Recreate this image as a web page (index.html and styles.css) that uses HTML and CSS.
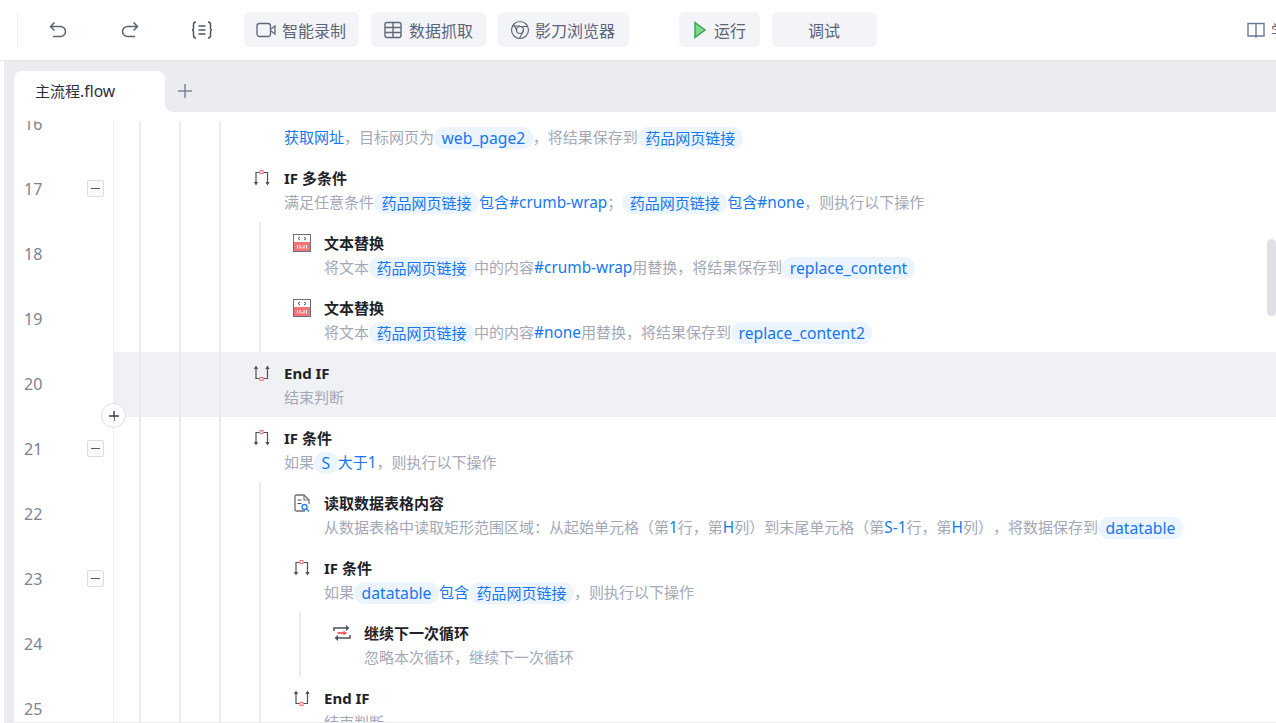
FILE: index.html
```html
<!DOCTYPE html>
<html lang="zh-CN">
<head>
<meta charset="utf-8">
<title>主流程.flow</title>
<link rel="stylesheet" href="styles.css">
</head>
<body>
<svg class="defs" width="0" height="0" aria-hidden="true">
  <symbol id="i-if" viewBox="0 0 20 20">
    <path d="M4 15V4.500H7.500M11.500 4.500H15.500V15" fill="none" stroke="#4d525d" stroke-width="1.200"/>
    <path d="M1.800 14L4 17.500L6.200 14ZM13.300 14L15.500 17.500L17.700 14Z" fill="#4d525d"/>
    <rect x="8" y="2.600" width="3" height="3" fill="#fff" stroke="#ee6a6a" stroke-width="1"/>
  </symbol>
  <symbol id="i-end" viewBox="0 0 20 20">
    <path d="M4 5V15.500H7.500M11.500 15.500H15.500V5" fill="none" stroke="#4d525d" stroke-width="1.200"/>
    <path d="M1.800 6L4 2.500L6.200 6ZM13.300 6L15.500 2.500L17.700 6Z" fill="#4d525d"/>
    <rect x="8" y="14.400" width="3" height="3" fill="#fff" stroke="#ee6a6a" stroke-width="1"/>
  </symbol>
  <symbol id="i-text" viewBox="0 0 20 20">
    <rect x="1.500" y="1.500" width="17" height="17" fill="#fff" stroke="#6b6f78"/>
    <rect x="2" y="9" width="16" height="9" fill="#f27474"/>
    <path d="M8 4L6 5.500L8 7M12 4L14 5.500L12 7" fill="none" stroke="#4a4f58" stroke-width="1"/>
    <path d="M5.500 12v3.500M8 12v3.500M10 14v1.500M12 12v3.500M14.500 12v3.500" stroke="#fff" stroke-width="1"/>
  </symbol>
  <symbol id="i-read" viewBox="0 0 20 20">
    <path d="M13 18H4.500Q3 18 3 16.500V3.500Q3 2 4.500 2H12L17 7V11" fill="none" stroke="#6b6f78" stroke-width="1.300"/>
    <path d="M12 2V7H17" fill="none" stroke="#6b6f78" stroke-width="1.100"/>
    <path d="M5.500 7H9.500M5.500 10.500H9.500" stroke="#4a4f58" stroke-width="1.200"/>
    <circle cx="12.500" cy="14" r="2.500" fill="none" stroke="#2f7ff0" stroke-width="1.400"/>
    <path d="M14.500 16L17 18.500" stroke="#2f7ff0" stroke-width="1.500"/>
  </symbol>
  <symbol id="i-loop" viewBox="0 0 20 20">
    <path d="M2 8V5H16" fill="none" stroke="#4d525d" stroke-width="1.500"/>
    <path d="M18 12V15H4" fill="none" stroke="#4d525d" stroke-width="1.500"/>
    <path d="M14 2L17.500 5L14 8ZM6 12L2.500 15L6 18Z" fill="#4d525d"/>
    <path d="M5.500 10H12.500" stroke="#f05a5a" stroke-width="1.800"/>
    <path d="M11.500 7.500L15 10L11.500 12.500Z" fill="#f05a5a"/>
  </symbol>
</svg>

<header class="topbar">
  <span class="divider"></span>
  <span class="tool tool-first">
    <svg class="ico" viewBox="0 0 20 20"><path d="M6.500 2.500L2.500 6.500L6.500 10.500M3 6.500H12.500A5 5 0 0 1 12.500 16.500H5" fill="none" stroke="#5c6370" stroke-width="1.500"/></svg>
  </span>
  <span class="tool">
    <svg class="ico" viewBox="0 0 20 20"><path d="M13.500 2.500L17.500 6.500L13.500 10.500M17 6.500H7.500A5 5 0 0 0 7.500 16.500H15" fill="none" stroke="#5c6370" stroke-width="1.500"/></svg>
  </span>
  <span class="tool">
    <svg class="ico-wide" viewBox="0 0 22 20"><path d="M5 2Q2.500 2 2.500 4.500V8Q2.500 10 1 10Q2.500 10 2.500 12V15.500Q2.500 18 5 18M17 2Q19.500 2 19.500 4.500V8Q19.500 10 21 10Q19.500 10 19.500 12V15.500Q19.500 18 17 18M7.500 6H14.500M7.500 10H14.500M7.500 14H14.500" fill="none" stroke="#4f5665" stroke-width="1.500"/></svg>
  </span>
  <button class="btn btn-first" type="button">
    <svg class="ico" viewBox="0 0 20 20"><rect x="1" y="3.500" width="13.500" height="13" rx="2.500" fill="none" stroke="#5f6778" stroke-width="1.300"/><path d="M15 9L19 6V14L15 11" fill="none" stroke="#5f6778" stroke-width="1.300"/></svg>
    智能录制
  </button>
  <button class="btn" type="button">
    <svg class="ico" viewBox="0 0 20 20"><rect x="2" y="2.500" width="16" height="15" rx="2" fill="none" stroke="#5f6778" stroke-width="1.400"/><path d="M2 7.500H18M2 12.500H18M10 2.500V17.500" stroke="#5f6778" stroke-width="1.400"/></svg>
    数据抓取
  </button>
  <button class="btn btn-wide" type="button">
    <svg class="ico" viewBox="0 0 20 20"><circle cx="10" cy="10" r="8.500" fill="none" stroke="#5f6778" stroke-width="1.200"/><circle cx="10" cy="10" r="3.500" fill="none" stroke="#5f6778" stroke-width="1.200"/><path d="M3 6H10M13.500 10L9.500 18.500M6.500 10L3.500 4.500M10 6.500H17.500" fill="none" stroke="#5f6778" stroke-width="1.100"/></svg>
    影刀浏览器
  </button>
  <button class="btn btn-run" type="button">
    <svg class="play" viewBox="0 0 14 20"><path d="M2 2.500L12 10L2 17.500Z" fill="#7fd68d" stroke="#3fa652" stroke-width="1.500"/></svg>
    运行
  </button>
  <button class="btn btn-debug" type="button">调试</button>
  <span class="help">
    <svg class="ico" viewBox="0 0 20 20"><path d="M2 3.500H18V16H11L10 17L9 16H2ZM10 3.500V16.500" fill="none" stroke="#6c7a96" stroke-width="1.400"/></svg>
    学习中心
  </span>
</header>

<main class="workspace">
  <div class="tabbar">
    <div class="tabcol"><div class="tab">主流程<span class="lat">.flow</span></div></div>
    <div class="tabrest">
      <svg class="plus" viewBox="0 0 16 16"><path d="M8 1V15M1 8H15" stroke="#7d8494" stroke-width="1.500"/></svg>
    </div>
  </div>
  <section class="editor">
    <div class="viewport">
      <div class="list">

        <div class="row">
          <div class="gutter"><span class="num">16</span></div>
          <div class="body">
            <i class="ind first"></i><i class="ind"></i><i class="ind"></i><i class="ind"></i>
            <div class="step">
              <span class="icon"></span>
              <div class="text">
                <div class="title">&nbsp;</div>
                <div class="desc"><b>获取网址</b>，目标网页为<span class="chip lat">web_page2</span>，将结果保存到<span class="chip">药品网页链接</span></div>
              </div>
            </div>
          </div>
        </div>

        <div class="row">
          <div class="gutter"><span class="num">17</span><span class="toggle"></span></div>
          <div class="body">
            <i class="ind first"></i><i class="ind"></i><i class="ind"></i><i class="ind"></i>
            <div class="step">
              <svg class="icon"><use href="#i-if"/></svg>
              <div class="text">
                <div class="title">IF 多条件</div>
                <div class="desc">满足任意条件<span class="chip">药品网页链接</span><b>包含<span class="lat">#crumb-wrap</span></b>；<span class="chip">药品网页链接</span><b>包含<span class="lat">#none</span></b>，则执行以下操作</div>
              </div>
            </div>
          </div>
        </div>

        <div class="row">
          <div class="gutter"><span class="num">18</span></div>
          <div class="body">
            <i class="ind first"></i><i class="ind"></i><i class="ind"></i><i class="ind"></i><i class="ind"></i>
            <div class="step">
              <svg class="icon"><use href="#i-text"/></svg>
              <div class="text">
                <div class="title">文本替换</div>
                <div class="desc">将文本<span class="chip">药品网页链接</span>中的内容<b class="lat">#crumb-wrap</b>用替换，将结果保存到<span class="chip lat">replace_content</span></div>
              </div>
            </div>
          </div>
        </div>

        <div class="row">
          <div class="gutter"><span class="num">19</span></div>
          <div class="body">
            <i class="ind first"></i><i class="ind"></i><i class="ind"></i><i class="ind"></i><i class="ind"></i>
            <div class="step">
              <svg class="icon"><use href="#i-text"/></svg>
              <div class="text">
                <div class="title">文本替换</div>
                <div class="desc">将文本<span class="chip">药品网页链接</span>中的内容<b class="lat">#none</b>用替换，将结果保存到<span class="chip lat">replace_content2</span></div>
              </div>
            </div>
          </div>
        </div>

        <div class="row row-active">
          <div class="gutter"><span class="num">20</span></div>
          <div class="body">
            <i class="ind first"></i><i class="ind"></i><i class="ind"></i><i class="ind"></i>
            <div class="step">
              <svg class="icon"><use href="#i-end"/></svg>
              <div class="text">
                <div class="title">End IF</div>
                <div class="desc">结束判断</div>
              </div>
            </div>
          </div>
          <span class="add"><svg viewBox="0 0 12 12"><path d="M6 1V11M1 6H11" stroke="#3c4250" stroke-width="1.500"/></svg></span>
        </div>

        <div class="row">
          <div class="gutter"><span class="num">21</span><span class="toggle"></span></div>
          <div class="body">
            <i class="ind first"></i><i class="ind"></i><i class="ind"></i><i class="ind"></i>
            <div class="step">
              <svg class="icon"><use href="#i-if"/></svg>
              <div class="text">
                <div class="title">IF 条件</div>
                <div class="desc">如果<span class="chip lat">S</span><b>大于<span class="lat">1</span></b>，则执行以下操作</div>
              </div>
            </div>
          </div>
        </div>

        <div class="row">
          <div class="gutter"><span class="num">22</span></div>
          <div class="body">
            <i class="ind first"></i><i class="ind"></i><i class="ind"></i><i class="ind"></i><i class="ind"></i>
            <div class="step">
              <svg class="icon"><use href="#i-read"/></svg>
              <div class="text">
                <div class="title">读取数据表格内容</div>
                <div class="desc">从数据表格中读取矩形范围区域：从起始单元格（第<b class="lat">1</b>行，第<b class="lat">H</b>列）到末尾单元格（第<b class="lat">S-1</b>行，第<b class="lat">H</b>列），将数据保存到<span class="chip lat">datatable</span></div>
              </div>
            </div>
          </div>
        </div>

        <div class="row">
          <div class="gutter"><span class="num">23</span><span class="toggle"></span></div>
          <div class="body">
            <i class="ind first"></i><i class="ind"></i><i class="ind"></i><i class="ind"></i><i class="ind"></i>
            <div class="step">
              <svg class="icon"><use href="#i-if"/></svg>
              <div class="text">
                <div class="title">IF 条件</div>
                <div class="desc">如果<span class="chip lat">datatable</span><b>包含</b><span class="chip">药品网页链接</span>，则执行以下操作</div>
              </div>
            </div>
          </div>
        </div>

        <div class="row">
          <div class="gutter"><span class="num">24</span></div>
          <div class="body">
            <i class="ind first"></i><i class="ind"></i><i class="ind"></i><i class="ind"></i><i class="ind"></i><i class="ind"></i>
            <div class="step">
              <svg class="icon"><use href="#i-loop"/></svg>
              <div class="text">
                <div class="title">继续下一次循环</div>
                <div class="desc">忽略本次循环，继续下一次循环</div>
              </div>
            </div>
          </div>
        </div>

        <div class="row">
          <div class="gutter"><span class="num">25</span></div>
          <div class="body">
            <i class="ind first"></i><i class="ind"></i><i class="ind"></i><i class="ind"></i><i class="ind"></i>
            <div class="step">
              <svg class="icon"><use href="#i-end"/></svg>
              <div class="text">
                <div class="title">End IF</div>
                <div class="desc">结束判断</div>
              </div>
            </div>
          </div>
        </div>

      </div>
    </div>
    <span class="scrollbar"></span>
  </section>
</main>
</body>
</html>
```
FILE: styles.css
```css
* { box-sizing: border-box; }
html, body { margin: 0; height: 100%; }
body {
  display: flex;
  flex-direction: column;
  overflow: hidden;
  background: #fff;
  font-family: "Noto Sans", "Noto Sans CJK SC", sans-serif;
  text-spacing-trim: space-all;
}
.defs { display: block; width: 0; height: 0; overflow: hidden; flex: none; }
.lat { font-size: 15.700px; }
b.lat, b .lat { font-size: 15.400px; }

/* top bar */
.topbar {
  flex: none;
  height: 61px;
  display: flex;
  align-items: center;
  padding: 0 0 1px 17px;
  border-bottom: 1px solid #e4e5ea;
  overflow: hidden;
  color: #5c6478;
  font-size: 16px;
}
.divider { flex: none; width: 1px; height: 36px; background: #eeeff2; }
.tool { flex: none; width: 40px; margin-left: 32px; display: flex; justify-content: center; }
.tool-first { margin-left: 20px; }
.ico { flex: none; width: 20px; height: 20px; display: block; }
.ico-wide { flex: none; width: 22px; height: 20px; display: block; }
.btn {
  flex: none;
  height: 35px;
  margin: 0 0 0 12px;
  padding: 0 13px 0 12px;
  display: flex;
  align-items: center;
  gap: 6px;
  border: 0;
  border-radius: 6px;
  background: #f3f4f8;
  color: #5c6478;
  font: inherit;
}
.btn-first { margin-left: 22px; }
.btn-wide { gap: 5px; padding-right: 14px; }
.btn-run { margin-left: 50px; padding: 0 14px 0 14px; gap: 7px; }
.btn-debug { padding: 0 37px 0 36px; }
.play { flex: none; width: 14px; height: 20px; display: block; }
.help { flex: none; margin-left: 369px; display: flex; align-items: center; gap: 5px; white-space: nowrap; color: #5c6478; }

/* workspace */
.workspace {
  flex: 1;
  min-height: 0;
  margin-left: 4px;
  padding: 0 0 1px 10px;
  display: flex;
  flex-direction: column;
  background: #ebecf0;
}
.tabbar { flex: none; height: 51px; display: flex; background: #fff; }
.tabcol { flex: none; width: 151px; padding-top: 10px; background: #ebecf0; }
.tab {
  height: 41px;
  padding: 10px 0 0 21px;
  border-radius: 8px 8px 0 0;
  background: #fff;
  color: #2b303b;
  font-size: 15px;
  line-height: 21px;
}
.tabrest {
  flex: 1;
  display: flex;
  align-items: center;
  padding: 9px 0 0 12px;
  border-bottom-left-radius: 8px;
  background: #ebecf0;
}
.plus { width: 16px; height: 16px; display: block; }

/* editor */
.editor {
  flex: 1;
  min-height: 0;
  position: relative;
  padding-top: 9px;
  display: flex;
  flex-direction: column;
  background: #fff;
}
.viewport { flex: 1; min-height: 0; overflow: hidden; }
.list { margin-top: -29px; }
.row { position: relative; height: 65px; display: flex; }
.gutter {
  flex: none;
  width: 99px;
  padding: 0 9px 2px 10px;
  display: flex;
  align-items: center;
  justify-content: space-between;
}
.num { color: #7d8390; font-size: 16px; }
.toggle {
  position: relative;
  width: 17px;
  height: 17px;
  border: 1px solid #dcdde1;
  border-radius: 2px;
  background: #fafafb;
}
.toggle::after {
  content: "";
  position: absolute;
  left: 3px;
  right: 3px;
  top: 7px;
  height: 1px;
  background: #555b66;
}
.body { flex: 1; min-width: 0; display: flex; }
.row-active .body { background: #f0f1f5; }
.ind { flex: none; width: 40px; border-left: 2px solid #e9eaed; }
.ind.first { width: 26px; border-left: 1px solid #eeeff1; }
.step { margin-left: -7px; padding-top: 9px; display: flex; gap: 12px; min-width: 0; white-space: nowrap; }
.icon { flex: none; width: 20px; height: 20px; margin-top: 2px; display: block; }
.title { height: 24px; color: #1f2329; font-size: 15px; font-weight: 700; line-height: 24px; }
.desc { height: 25px; color: #a3a8b7; font-size: 15px; line-height: 25px; }
.desc b { color: #1677f0; font-weight: 400; }
.chip {
  display: inline-block;
  height: 22px;
  padding: 0 7.500px;
  border-radius: 11px;
  background: #ebf4ff;
  color: #1677f0;
  line-height: 23px;
  vertical-align: -1px;
}
.add {
  position: absolute;
  left: 87px;
  top: 51px;
  width: 25px;
  height: 25px;
  display: flex;
  align-items: center;
  justify-content: center;
  border: 1px solid #dfe0e4;
  border-radius: 50%;
  background: #fff;
}
.add svg { width: 12px; height: 12px; display: block; }
.scrollbar {
  position: absolute;
  right: 0;
  top: 127px;
  width: 9px;
  height: 77px;
  border-radius: 5px;
  background: #dfe0e5;
}
```
